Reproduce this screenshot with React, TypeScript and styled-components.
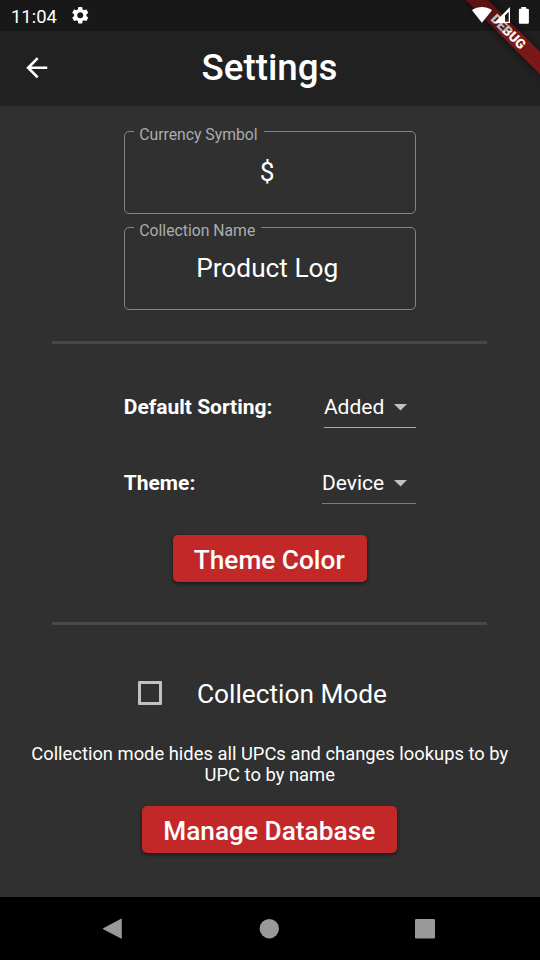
import React from "react";
import styled, { createGlobalStyle } from "styled-components";

const GlobalStyle = createGlobalStyle`
  * { box-sizing: border-box; }
  body { margin: 0; background: #303030; }
  button { font: inherit; border: 0; }
`;

const Screen = styled.div`
  position: relative;
  display: flex;
  flex-direction: column;
  width: 540px;
  height: 960px;
  overflow: hidden;
  background: #303030;
  color: #fff;
  font-family: Roboto, "Liberation Sans", sans-serif;
`;

const StatusBar = styled.div`
  position: relative;
  z-index: 3;
  flex: none;
  display: flex;
  align-items: center;
  height: 31px;
  padding: 0 11px;
  background: rgba(0, 0, 0, 0.25);
`;

const Clock = styled.span`
  font-size: 18.4px;
  line-height: 31px;
  padding-top: 2px;
  width: 59px;
`;

const StatusIcons = styled.svg`
  margin-left: auto;
  display: block;
`;

const TopArea = styled.header`
  position: relative;
  z-index: 1;
  flex: none;
  height: 105px;
  background: #212121;
  box-shadow: 0 1px 2px rgba(0, 0, 0, 0.2);
`;

const AppBar = styled.div`
  display: grid;
  grid-template-columns: 73px 1fr 73px;
  align-items: center;
  height: 74px;
`;

const BackButton = styled.button`
  display: flex;
  justify-content: center;
  padding: 0 0.5px 0 0;
  background: none;
  color: #fff;
`;

const Title = styled.h1`
  margin: 0 1px 2px 0;
  text-align: center;
  font-size: 36.75px;
  font-weight: 500;
  line-height: 43px;
`;

const Ribbon = styled.svg`
  position: absolute;
  z-index: 2;
  top: 0;
  right: 0;
`;

const Content = styled.main`
  flex: 1;
  display: flex;
  flex-direction: column;
  align-items: center;
  padding-top: 25.5px;
`;

const Field = styled.fieldset`
  width: 292.5px;
  height: 94px;
  margin: -11px 0 13px;
  padding: 0 0 0 9.5px;
  border: 1.3px solid #838383;
  border-radius: 5px;
  min-width: 0;
`;

const Legend = styled.legend`
  padding: 6px 6px 0 5px;
  color: #acacac;
  font-size: 15.75px;
  line-height: 18px;
`;

const Value = styled.div`
  padding-right: 15px;
  margin-top: 12px;
  text-align: center;
  font-size: 26.25px;
  line-height: 32px;
`;

const Divider = styled.hr`
  width: 435px;
  height: 3px;
  margin: 0 1px 0 0;
  border: 0;
  background: #484848;
`;

const FirstDivider = styled(Divider)`
  margin-top: 18px;
`;

const Options = styled.div`
  display: flex;
  flex-direction: column;
  gap: 34px;
  width: 292.5px;
  margin: 42px 0 31px;
`;

const OptionRow = styled.div`
  display: flex;
  justify-content: space-between;
  height: 42px;
  font-size: 21px;
  line-height: 42px;
`;

const OptionLabel = styled.span`
  font-weight: 700;
`;

const Select = styled.div<{ $line: string }>`
  display: flex;
  align-items: center;
  gap: 10px;
  padding: 1px 9px 0 0;
  border-bottom: 1px solid ${(p) => p.$line};
  line-height: 40px;
`;

const RaisedButton = styled.button<{ $width: number }>`
  width: ${(p) => p.$width}px;
  height: 47.5px;
  margin-right: 0.5px;
  padding: 3px 1px 0 0;
  border-radius: 5px;
  background: #c22828;
  color: #fff;
  font-size: 26.25px;
  font-weight: 500;
  line-height: 32px;
  box-shadow: 0 2px 3px rgba(0, 0, 0, 0.35), 0 1px 4px rgba(0, 0, 0, 0.18);
`;

const SecondDivider = styled(Divider)`
  margin-top: 39.5px;
`;

const CheckRow = styled.label`
  display: flex;
  align-items: center;
  align-self: flex-start;
  gap: 35px;
  margin: 51px 0 0 138px;
  font-size: 26.25px;
  line-height: 34px;
`;

const CheckBox = styled.span`
  width: 24px;
  height: 24px;
  border: 3px solid #c1c1c1;
  border-radius: 1px;
`;

const CheckText = styled.span`
  padding-top: 1px;
`;

const Hint = styled.p`
  width: 500px;
  margin: 32px 0 21px;
  padding-right: 0.5px;
  text-align: center;
  font-size: 18.375px;
  line-height: 21px;
`;

const NavBar = styled.nav`
  flex: none;
  display: flex;
  justify-content: space-between;
  align-items: center;
  height: 63px;
  padding: 0 105px 0 102px;
  background: #000;
`;

const GEAR =
  "M19.14 12.94c.04-.3.06-.61.06-.94 0-.32-.02-.64-.07-.94l2.03-1.58c.18-.14.23-.41.12-.61l-1.92-3.32c-.12-.22-.37-.29-.59-.22l-2.39.96c-.5-.38-1.03-.7-1.62-.94l-.36-2.54c-.04-.24-.24-.41-.48-.41h-3.84c-.24 0-.43.17-.47.41l-.36 2.54c-.59.24-1.13.57-1.62.94l-2.39-.96c-.22-.08-.47 0-.59.22L2.74 8.87c-.12.21-.08.47.12.61l2.03 1.58c-.05.3-.09.63-.09.94s.02.64.07.94l-2.03 1.58c-.18.14-.23.41-.12.61l1.92 3.32c.12.22.37.29.59.22l2.39-.96c.5.38 1.03.7 1.62.94l.36 2.54c.05.24.24.41.48.41h3.84c.24 0 .44-.17.47-.41l.36-2.54c.59-.24 1.13-.56 1.62-.94l2.39.96c.22.08.47 0 .59-.22l1.92-3.32c.12-.22.07-.47-.12-.61l-2.01-1.58zM12 15.6c-1.98 0-3.6-1.62-3.6-3.6s1.62-3.6 3.6-3.6 3.6 1.62 3.6 3.6-1.62 3.6-3.6 3.6z";

const Caret = () => (
  <svg width="13" height="8" viewBox="0 0 13 8" fill="#c1c1c1">
    <path d="M0 1h13L6.5 7.6z" />
  </svg>
);

export default function App() {
  return (
    <>
      <GlobalStyle />
      <Screen>
        <TopArea>
          <StatusBar>
            <Clock>11:04</Clock>
            <svg width="20.5" height="20.5" viewBox="0 0 24 24" fill="#fff">
              <path d={GEAR} />
            </svg>
            <StatusIcons width="58" height="31" viewBox="471 0 58 31" fill="#fff">
              <path d="M481.9 22.8L492 10.2C491.6 9.9 488 7 482 7S472.4 9.9 472 10.2z" />
              <path fillRule="evenodd" d="M510 7v16h-16zM508.700 11.800L505 15.500V21.700H508.700z" />
              <path d="M521.300 7h4.800v1.700h1.800q1 0 1 1v13q0 1.100-1 1.100h-8q-1 0-1-1.100v-13q0-1 1-1h1.400z" />
            </StatusIcons>
          </StatusBar>
          <AppBar>
            <BackButton aria-label="Back">
              <svg width="31.5" height="31.5" viewBox="0 0 24 24" fill="currentColor">
                <path d="M20 11H7.830l5.590-5.590L12 4l-8 8 8 8 1.410-1.410L7.830 13H20v-2z" />
              </svg>
            </BackButton>
            <Title>Settings</Title>
          </AppBar>
          <Ribbon width="90" height="90" viewBox="-90 0 90 90">
            <defs>
              <filter id="soft" x="-50%" y="-100%" width="200%" height="300%">
                <feGaussianBlur stdDeviation="4" />
              </filter>
            </defs>
            <g transform="rotate(45)">
              <rect x="-52.5" y="36.75" width="105" height="15.75" fill="#000" opacity="0.5" filter="url(#soft)" />
              <rect x="-52.5" y="36.75" width="105" height="15.75" fill="#b71c1c" fillOpacity="0.63" />
              <text
                x="0"
                y="49.4"
                textAnchor="middle"
                fill="#fff"
                fontFamily="Roboto, sans-serif"
                fontSize="13.4"
                fontWeight="900"
              >
                DEBUG
              </text>
            </g>
          </Ribbon>
        </TopArea>
        <Content>
          <Field>
            <Legend>Currency Symbol</Legend>
            <Value>$</Value>
          </Field>
          <Field>
            <Legend>Collection Name</Legend>
            <Value>Product Log</Value>
          </Field>
          <FirstDivider />
          <Options>
            <OptionRow>
              <OptionLabel>Default Sorting:</OptionLabel>
              <Select $line="#a8a8a8">
                Added
                <Caret />
              </Select>
            </OptionRow>
            <OptionRow>
              <OptionLabel>Theme:</OptionLabel>
              <Select $line="#7c7c7c">
                Device
                <Caret />
              </Select>
            </OptionRow>
          </Options>
          <RaisedButton $width={194.5}>Theme Color</RaisedButton>
          <SecondDivider />
          <CheckRow>
            <CheckBox role="checkbox" aria-checked="false" />
            <CheckText>Collection Mode</CheckText>
          </CheckRow>
          <Hint>Collection mode hides all UPCs and changes lookups to by UPC to by name</Hint>
          <RaisedButton $width={255}>Manage Database</RaisedButton>
        </Content>
        <NavBar>
          <svg width="21" height="22" viewBox="0 0 21 22" fill="#999">
            <path d="M19 .7q.8-.5.8.5v18.800q0 1-.8.5L1.200 11.200q-.7-.5 0-1z" />
          </svg>
          <svg width="20" height="20" viewBox="0 0 20 20" fill="#999">
            <circle cx="10.300" cy="9.700" r="9.700" />
          </svg>
          <svg width="20" height="20" viewBox="0 0 20 20" fill="#999">
            <rect width="20" height="19.500" rx="1.300" />
          </svg>
        </NavBar>
      </Screen>
    </>
  );
}
